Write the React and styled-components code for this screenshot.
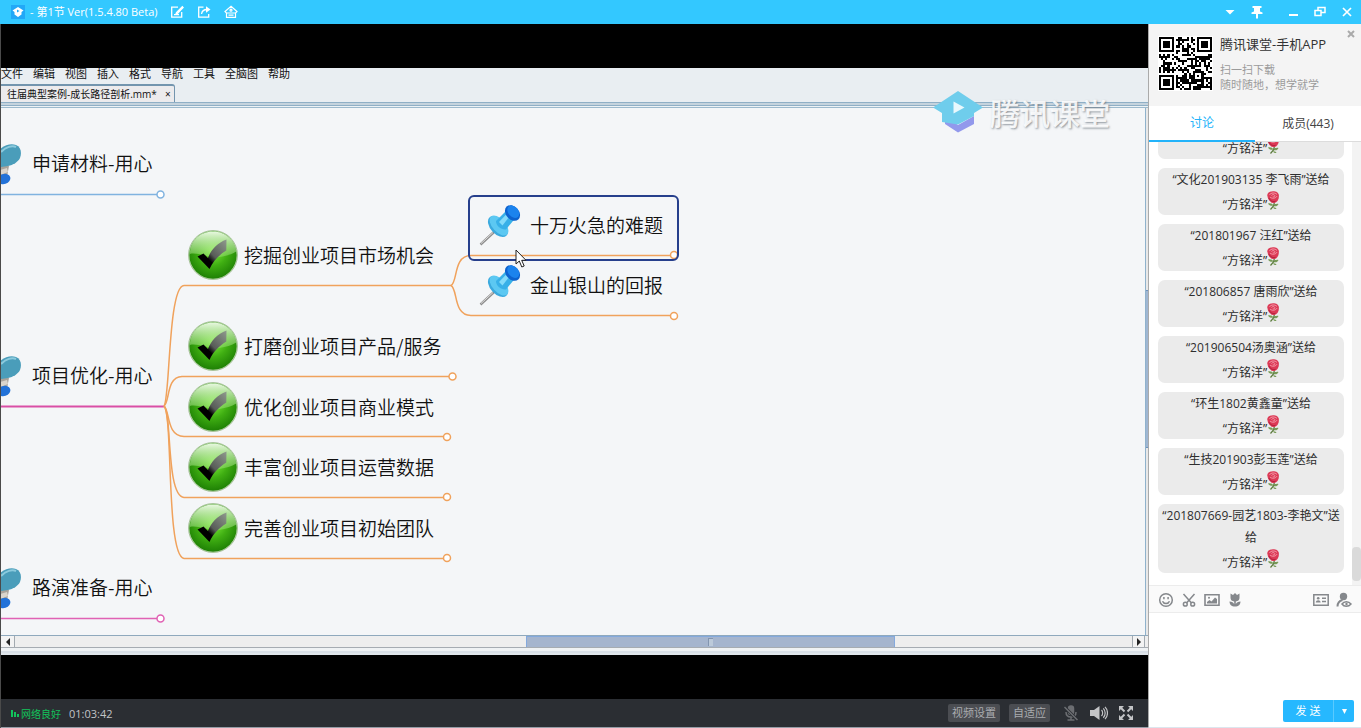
import React from 'react';
import styled, { createGlobalStyle } from 'styled-components';

const GlobalStyle = createGlobalStyle`
  * {
    box-sizing: border-box;
  }
  body {
    margin: 0;
    font-family: 'Open Sans', 'Noto Sans CJK SC', sans-serif;
    font-size: 12px;
    color: #333;
  }
  button, textarea {
    font: inherit;
    color: inherit;
  }
  svg {
    display: block;
    flex: none;
  }
`;

const Shell = styled.div`
  display: flex;
  flex-direction: column;
  height: 100vh;
  overflow: hidden;
  background: #fff;
`;

const IconButton = styled.button`
  display: flex;
  align-items: center;
  justify-content: center;
  padding: 0;
  border: 0;
  background: transparent;
  color: inherit;
  cursor: pointer;
`;

/* title bar */
const TitleBar = styled.header`
  display: flex;
  align-items: center;
  justify-content: space-between;
  height: 24px;
  flex: none;
  padding: 0 7px 0 11px;
  background: #33c8ff;
  color: #fff;
`;
const TitleGroup = styled.div`
  display: flex;
  align-items: center;
  gap: ${(p) => p.$gap}px;
`;
const Title = styled.h1`
  margin: 0 12px 0 5px;
  font-size: 11px;
  font-weight: 400;
  line-height: 24px;
  white-space: nowrap;
`;

const Body = styled.div`
  display: flex;
  flex: 1;
  min-height: 0;
`;

/* player */
const Player = styled.main`
  display: flex;
  flex-direction: column;
  flex: 1;
  min-width: 0;
  background: #000;
  border-left: 1px solid #4a4a4a;
`;
const Stage = styled.section`
  position: relative;
  display: flex;
  flex-direction: column;
  flex: 1;
  min-height: 0;
  margin: 44px 0;
  background: #e9eef2;
  color: #111;
`;
const MenuBar = styled.nav`
  display: flex;
  gap: 10px;
  height: 16px;
`;
const MenuItem = styled.button`
  height: 12px;
  padding: 0;
  border: 0;
  background: none;
  font-size: 11px;
  line-height: 12px;
  white-space: nowrap;
`;
const FileTabs = styled.div`
  display: flex;
  height: 18px;
`;
const FileTab = styled.button`
  display: flex;
  align-items: center;
  gap: 8px;
  padding: 0 3px 0 6px;
  border: 1px solid #7395ae;
  border-top-width: 2px;
  border-left: 0;
  border-bottom: 0;
  border-radius: 0 3px 0 0;
  background: #ecebed;
  font-size: 10px;
  line-height: 14px;
  white-space: nowrap;
`;
const TabRule = styled.div`
  height: 6px;
  flex: none;
  border-top: 1px solid #8fafc6;
  border-bottom: 1px solid #9dbacd;
  background: linear-gradient(#c5d3dd 0 2px, #8fafc6 2px 3px, #edf2f5 3px);
`;
const Workspace = styled.div`
  display: flex;
  flex: 1;
  min-height: 0;
`;
const Canvas = styled.div`
  position: relative;
  flex: 1;
  overflow: hidden;
  background: #f4f6f8;
`;
const Wires = styled.svg`
  position: absolute;
  left: 0;
  top: 0;
`;
const Topic = styled.div`
  position: absolute;
  left: ${(p) => p.$x}px;
  top: ${(p) => p.$y}px;
  display: flex;
  align-items: center;
  gap: ${(p) => p.$gap}px;
  font-family: 'Noto Sans CJK SC', sans-serif;
  font-size: 19px;
  font-weight: 350;
  line-height: 28px;
  white-space: nowrap;
`;
const Selection = styled.div`
  position: absolute;
  left: 467px;
  top: 87px;
  width: 211px;
  height: 66px;
  border: 2px solid #263f8c;
  border-radius: 6px;
`;
const Pointer = styled.svg`
  position: absolute;
  left: 514px;
  top: 141px;
`;
const VScroll = styled.div`
  display: grid;
  grid-template-rows: 182fr 158fr 187fr;
  width: 3px;
  border-left: 1px solid #8fb2cc;
  background: #e8e8e8;
`;
const VThumb = styled.div`
  grid-row: 2;
  background: #9fb6d2;
  border: solid #6f93bd;
  border-width: 1px 0;
`;
const HScroll = styled.div`
  display: grid;
  grid-template-columns: 14px 511fr 369fr 237fr 13px 3px;
  height: 13px;
  flex: none;
  border-top: 1px solid #8fa9bd;
  border-bottom: 1px solid #a6acb2;
  background: #eeeeee;
`;
const ScrollArrow = styled.button`
  display: flex;
  align-items: center;
  justify-content: center;
  grid-column: ${(p) => (p.$end ? 5 : 1)};
  grid-row: 1;
  padding: 0;
  border: solid #a3aab0;
  border-width: ${(p) => (p.$end ? '0 1px' : '0 1px 0 0')};
  background: #f3f3f3;
`;
const HThumb = styled.div`
  display: flex;
  align-items: center;
  justify-content: center;
  grid-column: 3;
  grid-row: 1;
  border: solid #84a9dd;
  border-width: 1px 1px 0;
  background: #a5b5ce;
`;
const Grip = styled.span`
  width: 5px;
  height: 8px;
  border: solid #8295b0;
  border-width: 1px 0 0 1px;
  background: #bccada;
`;
const StageFoot = styled.div`
  height: 7px;
  flex: none;
  background: linear-gradient(#eff2f4 0 3px, #d9e0e7 3px 5px, #e1e7ec 5px);
`;
const Watermark = styled.div`
  position: absolute;
  right: 38px;
  top: 22px;
  display: flex;
  align-items: center;
  gap: 7px;
  font-family: 'Noto Sans CJK SC', sans-serif;
  font-size: 30px;
  font-weight: 500;
  line-height: 44px;
  color: rgba(255, 255, 255, 0.9);
  text-shadow: 1px 1px 2px rgba(100, 110, 120, 0.7);
`;

const Controls = styled.footer`
  display: flex;
  align-items: center;
  justify-content: space-between;
  height: 29px;
  flex: none;
  padding: 0 15px 0 10px;
  border-bottom: 1px solid #969ca6;
  background: #2b2e33;
  color: #c2c4c7;
`;
const Network = styled.span`
  display: flex;
  align-items: center;
  gap: 2px;
  margin-right: 8px;
  font-size: 10px;
  color: #12c35b;
`;
const Clock = styled.time`
  font-size: 11px;
`;
const ControlGroup = styled.div`
  display: flex;
  align-items: center;
`;
const PlayerButton = styled.button`
  height: 18px;
  margin-right: 9px;
  padding: 0 4px;
  border: 0;
  border-radius: 2px;
  background: #4b4d52;
  color: #a9abaf;
  font-size: 11px;
  line-height: 18px;
`;
const PlayerIcons = styled.div`
  display: flex;
  gap: 11px;
  margin-left: 4px;
`;

/* side panel */
const Side = styled.aside`
  display: flex;
  flex-direction: column;
  width: 213px;
  flex: none;
  border-left: 1px solid #aaa;
  border-bottom: 1px solid #dce6ee;
`;
const Promo = styled.section`
  position: relative;
  display: flex;
  gap: 7px;
  height: 82px;
  flex: none;
  padding: 12px 9px;
  background: #f4f4f4;
`;
const QrFrame = styled.div`
  width: 55px;
  height: 55px;
  padding: 1px;
  background: #fff;
`;
const PromoTitle = styled.h2`
  margin: 0 0 9px;
  font-size: 13px;
  font-weight: 400;
  line-height: 17px;
  white-space: nowrap;
`;
const PromoText = styled.p`
  margin: 0;
  font-size: 11px;
  line-height: 15px;
  color: #9b9b9b;
  white-space: nowrap;
`;
const PromoClose = styled(IconButton)`
  position: absolute;
  right: 6px;
  top: 6px;
  color: #aaa;
`;
const Tabs = styled.div`
  display: flex;
  height: 36px;
  flex: none;
`;
const Tab = styled.button`
  flex: 1;
  padding: 0;
  border: 0;
  border-bottom: ${(p) => (p.$active ? '2px solid #23b3fa' : '1px solid #dcdcdc')};
  background: #fff;
  color: ${(p) => (p.$active ? '#23b3fa' : '#444')};
  line-height: 34px;
`;
const ChatArea = styled.div`
  display: flex;
  flex: 1;
  min-height: 0;
`;
const Messages = styled.ul`
  display: flex;
  flex: 1;
  flex-direction: column;
  justify-content: flex-end;
  gap: 9px;
  margin: 0;
  padding: 0 8px 12px 9px;
  overflow: hidden;
  list-style: none;
`;
const Bubble = styled.li`
  flex: none;
  padding-top: 1px;
  border-radius: 7px;
  background: #ebebeb;
  text-align: center;
  line-height: 22px;
  color: #2e2e2e;
`;
const GiftLine = styled.div`
  display: flex;
  align-items: flex-end;
  justify-content: center;
  height: 24px;
  line-height: 20px;
`;
const RoseIcon = styled.svg`
  margin-bottom: 5px;
`;
const ChatScroll = styled.div`
  display: flex;
  flex-direction: column;
  justify-content: flex-end;
  width: 9px;
  padding-bottom: 4px;
  background: #f3f3f3;
`;
const ChatThumb = styled.div`
  height: 34px;
  border-radius: 4px;
  background: #dadada;
`;
const Tools = styled.div`
  display: flex;
  justify-content: space-between;
  height: 28px;
  flex: none;
  padding: 2px 9px 0;
  border: solid #ececec;
  border-width: 1px 0;
  background: #fafafa;
  color: #85888c;
`;
const ToolGroup = styled.div`
  display: flex;
  gap: 7px;
`;
const Draft = styled.textarea`
  height: 87px;
  flex: none;
  padding: 6px 9px;
  border: 0;
  outline: 0;
  resize: none;
`;
const SendRow = styled.div`
  display: flex;
  justify-content: flex-end;
  flex: none;
  padding: 0 7px 5px 0;
`;
const SendButton = styled.button`
  display: flex;
  align-items: center;
  justify-content: center;
  width: ${(p) => (p.$more ? 21 : 50)}px;
  height: 22px;
  padding: 0;
  border: 0;
  border-left: ${(p) => (p.$more ? '1px solid #5acaff' : '0')};
  border-radius: ${(p) => (p.$more ? '0 2px 2px 0' : '2px 0 0 2px')};
  background: #26b8ff;
  color: #fff;
  font-size: 11px;
  line-height: 22px;
`;

const menus = ['文件', '编辑', '视图', '插入', '格式', '导航', '工具', '全脑图', '帮助'];

const mainTopics = [
  { text: '申请材料-用心', y: 41 },
  { text: '项目优化-用心', y: 253 },
  { text: '路演准备-用心', y: 465 },
];

const checkTopics = [
  { text: '挖掘创业项目市场机会', y: 122 },
  { text: '打磨创业项目产品/服务', y: 213 },
  { text: '优化创业项目商业模式', y: 274 },
  { text: '丰富创业项目运营数据', y: 334 },
  { text: '完善创业项目初始团队', y: 395 },
];

const pinTopics = [
  { text: '十万火急的难题', y: 96 },
  { text: '金山银山的回报', y: 156 },
];

const messages = [
  '文化201903135 李飞雨',
  '201801967 汪红',
  '201806857 唐雨欣',
  '201906504汤奥涵',
  '环生1802黄鑫童',
  '生技201903彭玉莲',
  '201807669-园艺1803-李艳文',
];

const QR_SIZE = 25;
const finderAt = (x, y) => {
  const corners = [[0, 0], [18, 0], [0, 18]];
  for (const [cx, cy] of corners) {
    const dx = x - cx;
    const dy = y - cy;
    if (dx >= -1 && dx <= 7 && dy >= -1 && dy <= 7) {
      const ring = Math.max(Math.abs(dx - 3), Math.abs(dy - 3));
      return ring === 3 || ring <= 1;
    }
  }
  if (x >= 16 && x <= 20 && y >= 16 && y <= 20) {
    return Math.max(Math.abs(x - 18), Math.abs(y - 18)) !== 1;
  }
  return null;
};

const qrPath = () => {
  let seed = 97;
  let d = '';
  for (let y = 0; y < QR_SIZE; y++) {
    for (let x = 0; x < QR_SIZE; x++) {
      seed = (seed * 1103515245 + 12345) % 2147483648;
      const fixed = finderAt(x, y);
      if (fixed === null ? seed / 2147483648 < 0.54 : fixed) d += `M${x} ${y}h1v1h-1z`;
    }
  }
  return d;
};

const QrCode = () => (
  <QrFrame>
    <svg width="53" height="53" viewBox="0 0 25 25" shapeRendering="crispEdges" role="img" aria-label="QR">
      <path d={qrPath()} fill="#000" />
    </svg>
  </QrFrame>
);

const Rose = () => (
  <RoseIcon width="12" height="19" viewBox="0 0 12 19">
    <path d="M7.500 11 6.500 15 3.500 18.500M6.500 15 9 13.500" stroke="#5b7a3c" strokeWidth="1.200" fill="none" />
    <path d="M6.500 14.500C5 12.300 3 12 1 12.500c1 2 3.500 2.800 5.500 2zM7 15c1-2 2.500-2.500 4.500-2-1 2-2.500 2.800-4.500 2zM6 16.500c1 1.500 2 1.800 3.500 1.500C9 17 8 16 6 16.500z" fill="#789c58" />
    <path d="M.3 4.500C0 2 2.500.3 6 .2c3.300 0 5.800 1.500 5.900 4.300.1 3.500-1.400 6.900-4.400 7.500C3.500 12.500.8 8.500.3 4.500z" fill="#dc3a56" />
    <path d="M2.500 3.800c1.500-2.300 5.500-2.500 7.500-.3M3 6c2 2 5.500 1.500 7-.8M4.500 4.500c1-1.200 2.800-1.200 3.300 0s-1 1.700-2 1.200" stroke="#f5a3b0" strokeWidth=".9" fill="none" />
    <path d="M1.800 7C3.500 10.300 6 11 8.500 10.300" stroke="#a81c38" strokeWidth=".9" fill="none" />
  </RoseIcon>
);

const Thumbtack = () => (
  <svg width="42" height="42" viewBox="0 0 42 42">
    <path d="M15 28 1.500 40.500" stroke="#8d8d8d" strokeWidth="2.400" />
    <path d="M14 28.500 2 39.500" stroke="#dedede" strokeWidth="1" />
    <ellipse cx="19" cy="22.500" rx="12.500" ry="7.500" transform="rotate(48 19 22.500)" fill="#3aa9de" />
    <ellipse cx="20" cy="21.500" rx="12" ry="6.500" transform="rotate(48 20 21.500)" fill="#5cc8f2" />
    <path d="M17 17 27.500 6.500 36 14.500 27 25.500C22 26 17 22 17 17z" fill="#38b0e8" />
    <path d="M20 18 29 8.500 31.500 11 23.500 21.500z" fill="#84dbfa" />
    <ellipse cx="33.500" cy="9" rx="8.700" ry="6.500" transform="rotate(48 33.500 9)" fill="#0c62cf" />
    <ellipse cx="34.300" cy="7.700" rx="7" ry="5" transform="rotate(48 34.300 7.700)" fill="#1b83ee" />
  </svg>
);

const CheckBall = () => (
  <svg width="50" height="50" viewBox="0 0 50 50">
    <defs>
      <radialGradient id="ball" cx=".5" cy=".42" r=".62">
        <stop offset="0" stopColor="#7fee3c" />
        <stop offset=".5" stopColor="#3fae12" />
        <stop offset="1" stopColor="#1a7a03" />
      </radialGradient>
      <linearGradient id="gloss" x1="0" y1="0" x2="0" y2="1">
        <stop offset="0" stopColor="#e8f8e0" />
        <stop offset="1" stopColor="#a6e583" stopOpacity=".4" />
      </linearGradient>
      <linearGradient id="tick" x1="1" y1="0" x2="0" y2="1">
        <stop offset="0" stopColor="#8f9a8d" />
        <stop offset=".5" stopColor="#585c58" />
        <stop offset=".65" stopColor="#000" />
      </linearGradient>
    </defs>
    <circle cx="25" cy="25" r="24.500" fill="#c9dfbd" stroke="#7fa76c" strokeWidth=".6" />
    <circle cx="25" cy="25" r="23.700" fill="url(#ball)" />
    <path d="M2 24C2 11 12 1.600 25 1.600c12 0 22 8.400 23.300 20-5 3-10 4.400-17 5.400C22 28.500 10 22 2 24z" fill="url(#gloss)" />
    <path d="M9.500 26.500 15.500 23.500 20 28C23 20 29 13 38.500 9.500L38.300 20.500C31 25 25 31 21.500 39z" fill="url(#tick)" />
  </svg>
);

const Lines = () => (
  <Wires width="700" height="527" viewBox="1 108 700 527" fill="none" strokeWidth="1.500">
    <path d="M0 194.500H157" stroke="#80b3e0" />
    <path d="M0 406.500H164" stroke="#d94fa6" strokeWidth="2" />
    <path d="M0 618.500H157" stroke="#e062b4" />
    <g stroke="#f0a25c">
      <path d="M164 406C170 400 168 286 184 285.500H451" />
      <path d="M164 406C170 402 166 377 182 376.500H449" />
      <path d="M164 406C170 410 166 436 184 436.500H443" />
      <path d="M164 406C172 412 166 496 184 497.500H443" />
      <path d="M164 406C173 414 166 556 184 558.500H443" />
      <path d="M451 285.500C458 282 453 255.500 471 255.500H671" />
      <path d="M451 285.500C458 289 453 315.500 471 315.500H671" />
    </g>
    <g fill="#fff" stroke="#f0a25c">
      <circle cx="452.500" cy="376.500" r="3.500" />
      <circle cx="447" cy="437" r="3.500" />
      <circle cx="447" cy="497" r="3.500" />
      <circle cx="447" cy="558" r="3.500" />
      <circle cx="674" cy="255" r="3.500" />
      <circle cx="674" cy="316" r="3.500" />
      <circle cx="160.500" cy="194.500" r="3.500" stroke="#80b3e0" />
      <circle cx="160.500" cy="618.500" r="3.500" stroke="#e062b4" />
    </g>
    {[0, 212, 424].map((dy) => (
      <g key={dy} transform={`translate(0 ${dy})`} stroke="none">
        <path d="M0 164 9 166 7 177 0 178z" fill="#a9a39b" />
        <path d="M0 170 7 168 8 172 0 175z" fill="#dad5cc" />
        <ellipse cx="4" cy="179" rx="6.500" ry="5" transform="rotate(-18 4 179)" fill="#2272d8" />
        <path d="M0 149C5 145 11 143 16 145c5 2 6 8 4 13-2 4-7 7-12 8l-8 1z" fill="#4a9dba" />
        <path d="M1 152C6 147 12 145 16 147" stroke="#8bcadd" strokeWidth="2" />
      </g>
    ))}
  </Wires>
);

const MindMap = () => (
  <Canvas>
    <Lines />
    {mainTopics.map((t) => (
      <Topic key={t.text} $x={31} $y={t.y} $gap={0}>{t.text}</Topic>
    ))}
    {checkTopics.map((t) => (
      <Topic key={t.text} $x={187} $y={t.y} $gap={6}>
        <CheckBall />
        {t.text}
      </Topic>
    ))}
    {pinTopics.map((t) => (
      <Topic key={t.text} $x={478} $y={t.y} $gap={9}>
        <Thumbtack />
        {t.text}
      </Topic>
    ))}
    <Selection />
    <Pointer width="12" height="19" viewBox="0 0 12 19">
      <path d="M1 1v14l3.300-3 2.500 6 2.400-1-2.500-5.700H11z" fill="#fff" stroke="#222" />
    </Pointer>
  </Canvas>
);

const GiftMessage = ({ from }) => (
  <Bubble>
    {from && `“${from}”送给`}
    <GiftLine>
      “方铭洋”
      <Rose />
    </GiftLine>
  </Bubble>
);

const Header = () => (
  <TitleBar>
    <TitleGroup $gap={0}>
      <svg width="14" height="14" viewBox="0 0 14 14">
        <path d="M0 0h14v14H0z" fill="#22a8f7" />
        <path d="M7 2 12.500 5.500 10.500 7v2.500L7 12 3.500 9.500V7L1.500 5.500z" fill="#fff" />
        <path d="M6 4.500v3L8.500 6z" fill="#22a8f7" />
      </svg>
      <Title>- 第1节 Ver(1.5.4.80 Beta)</Title>
      <TitleGroup $gap={13}>
        <IconButton aria-label="编辑">
          <svg width="14" height="14" viewBox="0 0 14 14" fill="none" stroke="#fff" strokeWidth="1.300">
            <path d="M8 2.200H1.700v10h10V7" />
            <path d="M12.800 1.200 6.500 7.500 6 9l1.500-.5L13.500 2M4 9.700h5" />
          </svg>
        </IconButton>
        <IconButton aria-label="分享">
          <svg width="14" height="14" viewBox="0 0 14 14" fill="none" stroke="#fff" strokeWidth="1.300">
            <path d="M6.500 2.200H1.700v10h10V9" />
            <path d="M4.500 9C5 6 7 4.500 10 4.500" />
            <path d="M9 1.300 13.500 4.500 9 7.700z" fill="#fff" stroke="none" />
          </svg>
        </IconButton>
        <IconButton aria-label="主页">
          <svg width="14" height="14" viewBox="0 0 14 14" fill="none" stroke="#fff" strokeWidth="1.200">
            <path d="M7 1.300 13 6.500 11.500 8v4.300h-9V8L1 6.500zM2.500 8h9M4.500 10.200h5" />
            <circle cx="7" cy="5.200" r="1" />
          </svg>
        </IconButton>
      </TitleGroup>
    </TitleGroup>
    <TitleGroup $gap={22}>
      <TitleGroup $gap={13}>
        <IconButton aria-label="菜单">
          <svg width="14" height="14" viewBox="0 0 14 14"><path d="M2.500 5h9L7 9.500z" fill="#fff" /></svg>
        </IconButton>
        <IconButton aria-label="置顶">
          <svg width="14" height="14" viewBox="0 0 14 14" fill="#fff"><path d="M2.500 1h9v2H10v3.500l2.500 1V9H8v4.500H6V9H1.500V7.500l2.500-1V3H2.500z" /></svg>
        </IconButton>
      </TitleGroup>
      <TitleGroup $gap={13}>
        <IconButton aria-label="最小化">
          <svg width="14" height="14" viewBox="0 0 14 14"><path d="M3 9h9v2H3z" fill="#fff" /></svg>
        </IconButton>
        <IconButton aria-label="还原">
          <svg width="14" height="14" viewBox="0 0 14 14" fill="none" stroke="#fff" strokeWidth="1.500"><path d="M2 5.500h6v5H2zM5 5V2.500h7v5H8.500" /></svg>
        </IconButton>
        <IconButton aria-label="关闭">
          <svg width="14" height="14" viewBox="0 0 14 14" stroke="#fff" strokeWidth="1.700"><path d="M3 3l8 8M11 3l-8 8" /></svg>
        </IconButton>
      </TitleGroup>
    </TitleGroup>
  </TitleBar>
);

const App = () => {
  return (
    <>
      <GlobalStyle />
      <Shell>
        <Header />
        <Body>
          <Player>
            <Stage>
              <MenuBar>
                {menus.map((m) => (
                  <MenuItem key={m}>{m}</MenuItem>
                ))}
              </MenuBar>
              <FileTabs>
                <FileTab>
                  往届典型案例-成长路径剖析.mm* <span>×</span>
                </FileTab>
              </FileTabs>
              <TabRule />
              <Workspace>
                <MindMap />
                <VScroll>
                  <VThumb />
                </VScroll>
              </Workspace>
              <HScroll>
                <ScrollArrow aria-label="向左">
                  <svg width="6" height="8" viewBox="0 0 6 8"><path d="M5 0v8L1 4z" fill="#222" /></svg>
                </ScrollArrow>
                <HThumb>
                  <Grip />
                </HThumb>
                <ScrollArrow $end aria-label="向右">
                  <svg width="6" height="8" viewBox="0 0 6 8"><path d="M1 0v8l4-4z" fill="#222" /></svg>
                </ScrollArrow>
              </HScroll>
              <StageFoot />
              <Watermark>
                <svg width="50" height="44" viewBox="0 0 50 44">
                  <path d="M12 26v8l13 8.500L41 34v-8L25 35z" fill="#9299ec" />
                  <path d="M25 1 50 17.500 41 23v3L25 34.500 9 32V23L0 17.500z" fill="#6fcdec" />
                  <path d="M20.500 11.500v12L31.500 17.500z" fill="#e9f8fd" />
                </svg>
                腾讯课堂
              </Watermark>
            </Stage>
            <Controls>
              <ControlGroup>
                <Network>
                  <svg width="8" height="8" viewBox="0 0 8 8" fill="#12c35b"><path d="M0 1h2v7H0zM3 3h2v5H3zM6 5h2v3H6z" /></svg>
                  网络良好
                </Network>
                <Clock>01:03:42</Clock>
              </ControlGroup>
              <ControlGroup>
                <PlayerButton>视频设置</PlayerButton>
                <PlayerButton>自适应</PlayerButton>
                <PlayerIcons>
                  <IconButton aria-label="麦克风">
                    <svg width="16" height="16" viewBox="0 0 16 16" fill="none" stroke="#6c6e72" strokeWidth="1.500">
                      <rect x="5.500" y="1" width="5" height="8.500" rx="2.500" fill="#6c6e72" />
                      <path d="M3 7c0 3 2 5 5 5s5-2 5-5M8 12v3M4.500 15h7" />
                      <path d="M1.500 2 14.500 15" stroke="#2b2e33" strokeWidth="3" />
                      <path d="M1.500 2 14.500 15" />
                    </svg>
                  </IconButton>
                  <IconButton aria-label="音量">
                    <svg width="18" height="16" viewBox="0 0 18 16" fill="none" stroke="#c4c5c7" strokeWidth="1.200">
                      <path d="M0 5h4l5.500-4v14L4 11H0z" fill="#c4c5c7" stroke="none" />
                      <path d="M11.500 5c1.500 1.500 1.500 4.500 0 6M13.300 3.300c2.500 2.500 2.500 7 0 9.400M15 1.800c3.300 3.300 3.300 9 0 12.400" />
                    </svg>
                  </IconButton>
                  <IconButton aria-label="全屏">
                    <svg width="14" height="14" viewBox="0 0 14 14" fill="#c4c5c7" stroke="#c4c5c7">
                      <path d="M0 0h5L0 5zM14 0v5L9 0zM0 14V9l5 5zM14 14H9l5-5z" stroke="none" />
                      <path d="M2 2l3.500 3.500M12 2 8.500 5.500M2 12l3.500-3.500M12 12 8.500 8.500" strokeWidth="2" />
                    </svg>
                  </IconButton>
                </PlayerIcons>
              </ControlGroup>
            </Controls>
          </Player>

          <Side>
            <Promo>
              <QrCode />
              <div>
                <PromoTitle>腾讯课堂-手机APP</PromoTitle>
                <PromoText>扫一扫下载</PromoText>
                <PromoText>随时随地，想学就学</PromoText>
              </div>
              <PromoClose aria-label="关闭">
                <svg width="8" height="8" viewBox="0 0 8 8" stroke="currentColor" strokeWidth="2"><path d="M1 1l6 6M7 1 1 7" /></svg>
              </PromoClose>
            </Promo>
            <Tabs>
              <Tab $active>讨论</Tab>
              <Tab>成员(443)</Tab>
            </Tabs>
            <ChatArea>
              <Messages>
                <GiftMessage />
                {messages.map((m) => (
                  <GiftMessage key={m} from={m} />
                ))}
              </Messages>
              <ChatScroll>
                <ChatThumb />
              </ChatScroll>
            </ChatArea>
            <Tools>
              <ToolGroup>
                <IconButton aria-label="表情">
                  <svg width="16" height="16" viewBox="0 0 16 16" fill="none" stroke="currentColor" strokeWidth="1.500">
                    <circle cx="8" cy="8" r="6.300" />
                    <path d="M4.500 9.300c1.200 3 5.800 3 7 0M5.900 5v2.200M10.100 5v2.200" />
                  </svg>
                </IconButton>
                <IconButton aria-label="截图">
                  <svg width="16" height="16" viewBox="0 0 16 16" fill="none" stroke="currentColor" strokeWidth="1.500">
                    <path d="M2.500 2 10.500 11M13.500 2 5.500 11" />
                    <circle cx="4.300" cy="12.200" r="1.900" />
                    <circle cx="11.700" cy="12.200" r="1.900" />
                  </svg>
                </IconButton>
                <IconButton aria-label="图片">
                  <svg width="16" height="16" viewBox="0 0 16 16" fill="none" stroke="currentColor" strokeWidth="1.600">
                    <path d="M1 2.800h14v10.400H1z" />
                    <path d="M3 11.500V10l2.500-2 2 1.500L11 5.500l2 1.500v4.500z" fill="currentColor" stroke="none" />
                    <circle cx="5" cy="5.800" r="1" fill="currentColor" stroke="none" />
                  </svg>
                </IconButton>
                <IconButton aria-label="送花">
                  <svg width="16" height="16" viewBox="0 0 16 16" fill="currentColor">
                    <path d="M3.500 1.500 6 3 8 1l2 2 2.500-1.500V6c0 2-1.500 3.200-3.700 3.500v2.700C9.500 10.500 11 9.700 13.500 9.500c0 3-2 5-5.500 5s-5.500-2-5.500-5c2.500.2 4 1 4.700 2.700V9.500C5 9.200 3.500 8 3.500 6z" />
                  </svg>
                </IconButton>
              </ToolGroup>
              <ToolGroup>
                <IconButton aria-label="名片">
                  <svg width="16" height="16" viewBox="0 0 16 16" fill="none" stroke="currentColor" strokeWidth="1.500">
                    <path d="M.8 2.800h14.400v10.400H.8zM9 6.300h4M9 9.500h4" />
                    <circle cx="5.200" cy="6.300" r="1.300" fill="currentColor" stroke="none" />
                    <path d="M2.800 10.500c0-3 4.800-3 4.800 0z" fill="currentColor" stroke="none" />
                  </svg>
                </IconButton>
                <IconButton aria-label="只看老师">
                  <svg width="16" height="16" viewBox="0 0 16 16" fill="none" stroke="currentColor" strokeWidth="1.500">
                    <circle cx="7.500" cy="4.500" r="3.700" fill="currentColor" stroke="none" />
                    <path d="M1.500 14.500C1.500 11 3 9 6.500 8" strokeWidth="2" />
                    <path d="M6 12c2-3 6.500-3 9 0-2.500 3-7 3-9 0z" />
                    <circle cx="10.500" cy="12" r="1.200" fill="currentColor" stroke="none" />
                  </svg>
                </IconButton>
              </ToolGroup>
            </Tools>
            <Draft aria-label="输入消息" />
            <SendRow>
              <SendButton>发 送</SendButton>
              <SendButton $more aria-label="发送选项">
                <svg width="5" height="5" viewBox="0 0 5 5"><path d="M0 0h5L2.500 5z" fill="#fff" /></svg>
              </SendButton>
            </SendRow>
          </Side>
        </Body>
      </Shell>
    </>
  );
};

export default App;
